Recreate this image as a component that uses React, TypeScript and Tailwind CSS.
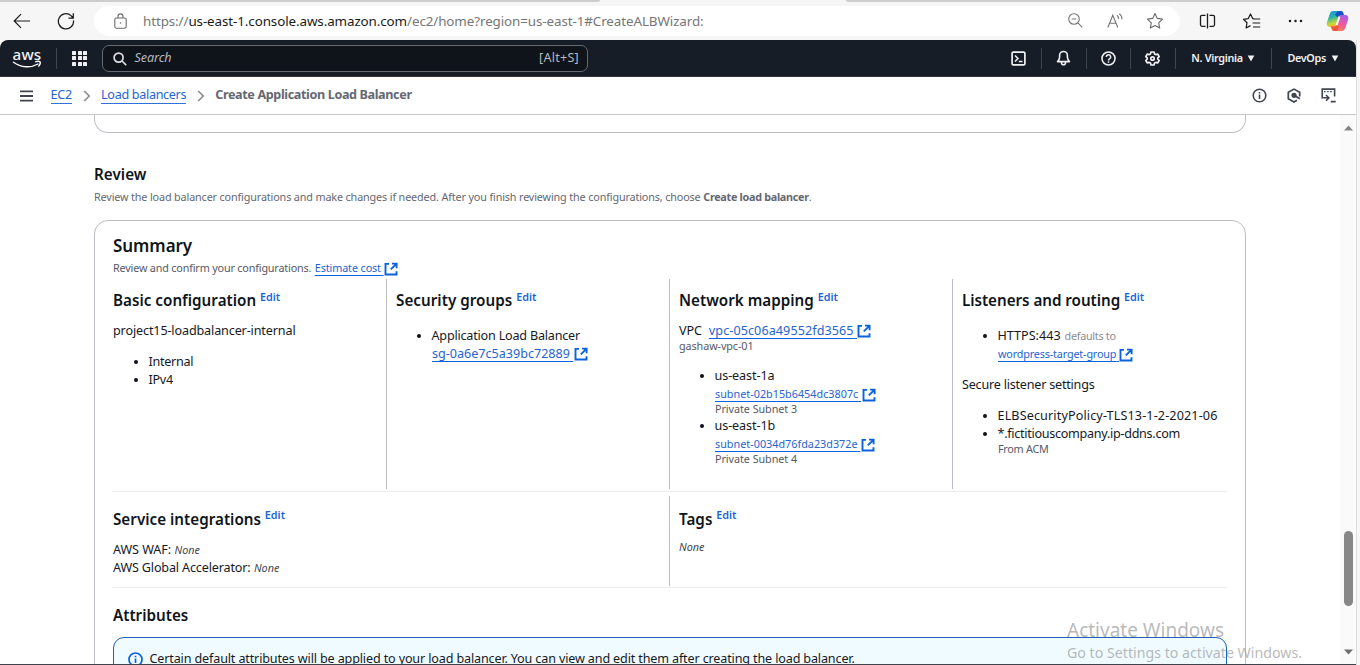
import type { ReactNode } from "react";

const body = "text-[12.6px] leading-[18px] h-[18px] pt-[2px] flex items-center";
const small = "text-[10.8px] leading-[16px] h-[16px] flex items-center";

function External({ className }: { className: string }) {
  return (
    <svg width="14" height="14" viewBox="0 0 14 14" fill="none" stroke="#0a62dd" strokeWidth="1.9" className={`ml-[0.5px] shrink-0 ${className}`}>
      <path d="M5 1.9H1.5v10.600h11V9.200M8 1.600h4.600v4.600M12.400 1.800 6.800 7.400" />
    </svg>
  );
}

function Link({ className, iconClass = "mt-px", children }: { className: string; iconClass?: string; children: ReactNode }) {
  return (
    <a className="flex items-center whitespace-pre text-[#2664cf]">
      <span className={`underline decoration-[#0a62dd] decoration-1 underline-offset-[3px] ${className}`}>{children}{"\u00a0"}</span>
      <External className={iconClass} />
    </a>
  );
}

function Heading({ children, edit = "mb-[6px]", className = "tracking-[0.02px]" }: { children: ReactNode; edit?: string; className?: string }) {
  return (
    <h3 className="flex h-[22px] items-center text-[15.2px] leading-[22px] font-semibold text-[#0f141a]">
      <span className={className}>{children}</span>
      {edit !== "" && <a className={`ml-[3.8px] text-[10.8px] leading-[14px] text-[#1b64d8] ${edit}`}>Edit</a>}
    </h3>
  );
}

function Item({ children }: { children: ReactNode }) {
  return (
    <li className={`${body} pl-[36px]`}>
      <span className="-ml-[15px] mr-[10.5px] -mt-px size-[4px] rounded-full bg-[#0f141a]" />
      {children}
    </li>
  );
}

function NavCell({ className, children }: { className: string; children: ReactNode }) {
  return (
    <div className="flex h-full items-center">
      <div className={`flex items-center justify-center pr-px ${className}`}>{children}</div>
      <div className="h-[21px] w-px bg-[#424650]" />
    </div>
  );
}

function Caret() {
  return (
    <svg width="8" height="7" viewBox="0 0 8 7" className="mt-px">
      <path d="M.7.6h6.6L4 6.4z" fill="#f0f1f4" />
    </svg>
  );
}

function BrowserBar() {
  return (
    <div className="flex h-[40px] flex-col bg-[#f6f6f6]">
      <div className="flex h-[2px] justify-between">
        <div className="w-[600px] rounded-br-[3px] bg-[#cdcdcd]" />
        <div className="w-[514px] rounded-bl-[3px] bg-[#cdcdcd]" />
      </div>
      <div className="flex h-[38px] items-center pl-[13px]">
        <svg width="18" height="18" viewBox="0 0 18 18" fill="none" stroke="#1b1b1b" strokeWidth="1.2" className="-mt-px">
          <path d="M17 9H1.5M8 2.2 1.2 9 8 15.8" />
        </svg>
        <svg width="18" height="18" viewBox="0 0 18 18" fill="none" stroke="#1b1b1b" strokeWidth="1.25" className="-mt-px ml-[26px]">
          <path d="M16.500 8.300A7.600 7.600 0 1 1 14 3.600L16.200 6M16.300 1.200V6h-4.800" />
        </svg>
        <div className="ml-[19px] flex h-[30px] w-[1086px] items-center rounded-full bg-white pl-[20px]">
          <svg width="13" height="16" viewBox="0 0 13 16" fill="none" stroke="#6b6b6b" strokeWidth="1.1" className="-mt-px">
            <rect x=".8" y="5" width="11.4" height="10.2" rx="1.6" />
            <path d="M4 5V3.400a2.500 2.500 0 0 1 5 0V5" />
            <circle cx="6.5" cy="10" r=".8" fill="#6b6b6b" stroke="none" />
          </svg>
          <div className="ml-[16px] w-[925px] text-[13.4px] leading-[18px] tracking-[-0.095px] whitespace-nowrap text-[#767676]">
            https://<span className="text-[#1a1a1a]">us-east-1.console.aws.amazon.com</span>/ec2/home?region=us-east-1#CreateALBWizard:
          </div>
          <svg width="15" height="15" viewBox="0 0 15 15" fill="none" stroke="#757575" strokeWidth="1.1" className="-mt-px">
            <circle cx="6" cy="6" r="5.3" />
            <path d="M3.600 6h4.800M9.900 9.900l4.400 4.400" />
          </svg>
          <svg width="17" height="16" viewBox="0 0 17 16" fill="none" stroke="#757575" strokeWidth="1.1" className="-mt-px ml-[24px]">
            <path d="m.8 14.500 5-12.300 5 12.300M2.600 10.200H9M10 2.200c1.300 1 1.700 2.400 1.400 3.800M12.300.8c2.300 1.800 3 3.600 2.400 5.600" />
          </svg>
          <svg width="18" height="18" viewBox="0 0 18 18" fill="none" stroke="#6b6b6b" strokeWidth="1.1" strokeLinejoin="round" className="ml-[22px]">
            <path d="m9 1.500 2.300 4.900 5.300.7-3.900 3.700 1 5.300L9 13.500l-4.700 2.600 1-5.300-3.900-3.700 5.300-.7z" />
          </svg>
        </div>
        <svg width="17" height="16" viewBox="0 0 17 16" fill="none" stroke="#1b1b1b" strokeWidth="1.3" className="ml-[19px]">
          <path d="M6.500 2.300H3a1.500 1.500 0 0 0-1.500 1.500v8A1.500 1.500 0 0 0 3 13.300h3.500M10.500 2.300H14a1.500 1.500 0 0 1 1.500 1.500v8a1.500 1.500 0 0 1-1.500 1.500h-3.500M8.500.5V15.500" />
        </svg>
        <svg width="18" height="17" viewBox="0 0 18 17" fill="none" stroke="#1b1b1b" strokeWidth="1.2" strokeLinejoin="round" className="ml-[27px]">
          <path d="M11.200 5.800 9.700 5.600 7.500 1 5.300 5.600l-4.900.7L4 9.800 3.100 15l4.400-2.400M10.600 6h6.600M9.600 10h7.600M10 14h7.200" />
        </svg>
        <svg width="15" height="4" viewBox="0 0 15 4" fill="#1b1b1b" className="ml-[27px]">
          <circle cx="2" cy="2" r="1.25" /><circle cx="7.500" cy="2" r="1.25" /><circle cx="13" cy="2" r="1.25" />
        </svg>
        <svg width="23" height="22" viewBox="0 0 23 22" className="ml-[23px]">
          <defs>
            <linearGradient id="cpA" x1="0" y1="0" x2="0.3" y2="1">
              <stop offset="0" stopColor="#1a8fe8" /><stop offset=".45" stopColor="#2fb5a0" /><stop offset=".8" stopColor="#c8d83a" /><stop offset="1" stopColor="#f5b82e" />
            </linearGradient>
            <linearGradient id="cpB" x1=".8" y1="0" x2=".2" y2="1">
              <stop offset="0" stopColor="#a45cf0" /><stop offset=".5" stopColor="#ee5a9a" /><stop offset="1" stopColor="#fb8a4a" />
            </linearGradient>
          </defs>
          <path d="M7.200 1h7.600c1.600 0 2.200 1 2.600 2.400L18 5.500h-2.600c-1.700 0-2.600.8-3.100 2.300L10 15c-.4 1.300-1 2-2.400 2H3.800C1.200 17 .2 15 .9 12.600L3.700 4C4.400 2 5.400 1 7.200 1z" fill="url(#cpA)" />
          <path d="M11.500 1h3.300c1.600 0 2.200 1 2.600 2.400L18 5.500h-2.600c-1.700 0-2.600.8-3.100 2.300L9 5z" fill="#1453c8" />
          <path d="M15.800 21H8.200c-1.600 0-2.200-1-2.600-2.400L5 16.500h2.600c1.700 0 2.600-.8 3.100-2.300L13 7c.4-1.300 1-2 2.400-2h3.800c2.600 0 3.600 2 2.900 4.400L19.300 18c-.7 2-1.700 3-3.500 3z" fill="url(#cpB)" />
          <path d="M11.500 21H8.200c-1.600 0-2.200-1-2.600-2.400L5 16.500h2.600c1.700 0 2.600-.8 3.100-2.300l2.300 2z" fill="#f0563e" />
          <path d="m9.600 15 3.200-9.200 1.400 1.600-2.700 8z" fill="#fff" />
        </svg>
      </div>
    </div>
  );
}

function NavBar() {
  return (
    <div className="flex h-[37px] w-[1356px] items-center rounded-t-[8px] border-b border-[#2e333c] bg-[#161d26] text-[#f0f1f4]">
      <div className="flex w-[56px] flex-col items-center pr-[2px]">
        <span className="h-[13px] text-[15.2px] leading-[12px] font-medium tracking-[0.2px]">aws</span>
        <svg width="30" height="9" viewBox="0 0 30 9" fill="none" stroke="#fff" strokeWidth="1.4" className="-mt-px" strokeLinecap="round">
          <path d="M1.500 2.200c7.500 5.500 17 6 24.500 1.800M23.800 1.700c1.700-.5 3.500-.5 4.200.1.500.8-.1 2.900-1.200 4.300" />
        </svg>
      </div>
      <div className="h-[21px] w-px bg-[#424650]" />
      <div className="ml-[15px] grid grid-cols-3 gap-[1.500px]">
        {[0, 1, 2, 3, 4, 5, 6, 7, 8].map((n) => (
          <span key={n} className="size-[4px] rounded-[0.5px] bg-[#f0f1f4]" />
        ))}
      </div>
      <div className="ml-[15px] flex h-[27px] w-[486px] items-center rounded-[7px] border border-[#656a74] bg-[#0f141a] pr-[8px] pl-[10px] text-[12.6px] leading-[18px] text-[#b4b8c0]">
        <svg width="14" height="14" viewBox="0 0 14 14" fill="none" stroke="#dedee3" strokeWidth="1.7" className="mt-px">
          <circle cx="5.600" cy="5.600" r="4.500" />
          <path d="m9 9 4.200 4.200" />
        </svg>
        <span className="ml-[7.500px] italic tracking-[-0.09px]">Search</span>
        <span className="ml-auto tracking-[0.25px]">[Alt+S]</span>
      </div>
      <div className="ml-auto flex h-full items-center text-[10.8px] leading-[16px] font-semibold">
        <NavCell className="w-[44px]">
          <svg width="15" height="15" viewBox="0 0 15 15" fill="none" stroke="#f0f1f4" strokeWidth="1.7">
            <rect x="1.100" y="1.100" width="12.800" height="12.800" rx="1.200" />
            <path d="m4 4.500 3 3-3 3M7.800 10.600h3.700" strokeWidth="1.5" />
          </svg>
        </NavCell>
        <NavCell className="w-[44px]">
          <svg width="15" height="16" viewBox="0 0 15 16" fill="none" stroke="#f0f1f4" strokeWidth="1.6" strokeLinejoin="round" className="mr-px">
            <path d="M1.500 11.600h12c-1.500-1.200-2.100-2.600-2.100-4.500V5.400a3.900 3.900 0 0 0-7.800 0v1.700c0 1.900-.6 3.300-2.100 4.500zM5.500 12v.8a2 2 0 0 0 4 0V12" />
          </svg>
        </NavCell>
        <NavCell className="w-[43px]">
          <svg width="15" height="15" viewBox="0 0 15 15" fill="none" stroke="#f0f1f4" strokeWidth="1.6">
            <circle cx="7.500" cy="7.500" r="6.500" />
            <path d="M5.300 6a2.200 2.200 0 1 1 3.200 1.900c-.7.400-1 .7-1 1.500M7.500 10.300v1.500" strokeWidth="1.5" />
          </svg>
        </NavCell>
        <NavCell className="w-[44px]">
          <svg width="15" height="15" viewBox="0 0 15 15" fill="none" stroke="#f0f1f4" strokeWidth="1.7" strokeLinejoin="round">
            <path d="m6 1-.5 1.900-1.300.7-2-.5-1.400 2.500 1.400 1.300v1.300L.8 9.500l1.400 2.400 2-.5 1.300.7L6 14h3l.5-1.900 1.300-.7 2 .5 1.400-2.400-1.400-1.300V6.900l1.400-1.300-1.400-2.500-2 .5-1.300-.7L9 1z" />
            <circle cx="7.500" cy="7.500" r="1.700" />
          </svg>
        </NavCell>
        <NavCell className="w-[95px] gap-[4px]">
          <span className="mb-px tracking-[-0.3px] whitespace-nowrap">N. Virginia</span>
          <Caret />
        </NavCell>
        <div className="flex w-[84px] items-center gap-[5px] pl-[15.500px]">
          <span className="mb-px tracking-[-0.35px]">DevOps</span>
          <Caret />
        </div>
      </div>
    </div>
  );
}

function Chevron() {
  return (
    <svg width="8" height="12" viewBox="0 0 8 12" fill="none" stroke="#8c8c94" strokeWidth="1.7">
      <path d="m1.200 1 5 5-5 5" />
    </svg>
  );
}

function Breadcrumbs() {
  const link = "border-b border-[#2f72d8] text-[#2664cf]";
  return (
    <div className="flex h-[38px] w-[1356px] items-center border-b border-[#c6c6cd] pl-[20px] text-[12.6px] leading-[16px] whitespace-nowrap">
      <svg width="13" height="12" viewBox="0 0 13 12" stroke="#424650" strokeWidth="1.8">
        <path d="M0 1.400h13M0 6h13M0 10.600h13" />
      </svg>
      <a className={`-mt-px ml-[17.500px] tracking-[-0.2px] ${link}`}>EC2</a>
      <span className="ml-[11px]"><Chevron /></span>
      <a className={`-mt-px ml-[10px] tracking-[-0.32px] ${link}`}>Load balancers</a>
      <span className="ml-[10.500px]"><Chevron /></span>
      <span className="-mt-[2px] ml-[10.500px] font-bold tracking-[-0.37px] text-[#656871]">Create Application Load Balancer</span>
      <svg width="15" height="15" viewBox="0 0 15 15" fill="none" stroke="#424650" strokeWidth="1.6" className="mr-[20px] ml-auto">
        <circle cx="7.500" cy="7.500" r="6.300" />
        <path d="M7.500 6.500v4.500M7.500 3.900v1.500" />
      </svg>
      <svg width="14" height="15" viewBox="0 0 14 15" fill="none" stroke="#424650" strokeWidth="1.7" className="mr-[20px]">
        <path d="M12.700 8.500V4.300L7 1.100 1.300 4.300v6.400L7 13.900l3-1.700" />
        <circle cx="7" cy="7.300" r="1.800" fill="#424650" />
        <path d="m7.500 7.500 5.300 3.300" />
      </svg>
      <svg width="15" height="15" viewBox="0 0 15 15" fill="none" stroke="#424650" strokeWidth="1.6" className="mr-[20px]">
        <path d="M13.600 8.500V1.100H1.200v8.700h6M5 7l2.900 2.900L5 12.800M9.700 13.600h5" />
        <path d="M3 3.600h8.800" strokeDasharray="1.600 1.500" strokeWidth="1.3" />
      </svg>
    </div>
  );
}

function Summary() {
  return (
    <section className="mt-[15px] flex h-[500px] w-[1152px] shrink-0 flex-col rounded-t-[14px] border border-[#bdbdc4] px-[18px] pt-[13px]">
      <h2 className="h-[24px] text-[17px] leading-[24px] font-semibold tracking-[-0.05px] text-[#0f141a]">Summary</h2>
      <div className={`${small} mt-[2px] text-[#565963]`}>
        <span className="mr-[3.500px] tracking-[-0.17px]">Review and confirm your configurations.</span>
        <Link className="tracking-[-0.11px]">Estimate cost</Link>
      </div>
      <div className="mt-[3px] flex h-[210px] text-[#16191f]">
        <div className="w-[274px] border-r border-[#bdbdc4] pt-[10px]">
          <Heading>Basic configuration</Heading>
          <div className={`${body} mt-[10px] tracking-[-0.135px]`}>project15-loadbalancer-internal</div>
          <ul className="mt-[13px]">
            <Item><span className="tracking-[-0.3px]">Internal</span></Item>
            <Item><span className="tracking-[-0.3px]">IPv4</span></Item>
          </ul>
        </div>
        <div className="w-[283px] border-r border-[#bdbdc4] pt-[10px] pl-[9px]">
          <Heading className="tracking-[0.04px]">Security groups</Heading>
          <ul className="mt-[15px]">
            <Item><span className="tracking-[-0.205px]">Application Load Balancer</span></Item>
          </ul>
          <div className={`${body} pl-[36px]`}><Link className="tracking-[-0.01px]" iconClass="-mt-px">sg-0a6e7c5a39bc72889</Link></div>
        </div>
        <div className="w-[283px] border-r border-[#bdbdc4] pt-[10px] pl-[9px]">
          <Heading>Network mapping</Heading>
          <div className={`${body} mt-[10px]`}>
            <span className="mr-[7px] tracking-[-0.1px]">VPC</span>
            <Link className="tracking-[0.08px]" iconClass="-mt-px">vpc-05c06a49552fd3565</Link>
          </div>
          <div className={`${small} -mt-px tracking-[-0.092px] text-[#565963]`}>gashaw-vpc-01</div>
          <ul className="mt-[12px]">
            <Item><span className="tracking-[-0.094px]">us-east-1a</span></Item>
            <li className="mt-[2px] mb-[-1px] pl-[36px]">
              <div className={small}><Link className="tracking-[0.01px]">subnet-02b15b6454dc3807c</Link></div>
              <div className={`${small} -mt-px tracking-[-0.06px] text-[#565963]`}>Private Subnet 3</div>
            </li>
            <Item><span className="tracking-[-0.094px]">us-east-1b</span></Item>
            <li className="mt-[2px] pl-[36px]">
              <div className={small}><Link className="tracking-[0.01px]">subnet-0034d76fda23d372e</Link></div>
              <div className={`${small} -mt-px tracking-[-0.06px] text-[#565963]`}>Private Subnet 4</div>
            </li>
          </ul>
        </div>
        <div className="flex-1 pt-[10px] pl-[9px]">
          <Heading className="tracking-[-0.03px]">Listeners and routing</Heading>
          <ul className="mt-[15px]">
            <Item>
              <span>HTTPS:443</span>
              <span className="ml-[4px] text-[10.8px] tracking-[-0.29px] text-[#8c8c94]">defaults to</span>
            </Item>
          </ul>
          <div className={`${small} mt-[2px] pl-[36px]`}><Link className="tracking-[-0.16px]">wordpress-target-group</Link></div>
          <div className={`${body} mt-[13px] tracking-[-0.22px]`}>Secure listener settings</div>
          <ul className="mt-[13px]">
            <Item><span className="tracking-[0.126px] whitespace-nowrap">ELBSecurityPolicy-TLS13-1-2-2021-06</span></Item>
            <Item><span className="tracking-[-0.29px]">*.fictitiouscompany.ip-ddns.com</span></Item>
          </ul>
          <div className={`${small} -mt-px pl-[36px] tracking-[-0.26px] text-[#565963]`}>From ACM</div>
        </div>
      </div>
      <div className="mt-[2px] h-px w-[1114px] shrink-0 bg-[#ebebf0]" />
      <div className="mt-[4px] flex h-[90px] shrink-0 text-[#16191f]">
        <div className="w-[557px] border-r border-[#bdbdc4] pt-[12px]">
          <Heading edit="mb-[8px]">Service integrations</Heading>
          <div className={`${body} mt-[10px]`}>
            <span className="mr-[3.500px] tracking-[-0.076px]">AWS WAF:</span>
            <i className="text-[10.8px] text-[#424650]">None</i>
          </div>
          <div className={body}>
            <span className="mr-[3.500px] tracking-[-0.16px]">AWS Global Accelerator:</span>
            <i className="text-[10.8px] text-[#424650]">None</i>
          </div>
        </div>
        <div className="pt-[12px] pl-[9px]">
          <Heading edit="mb-[8px]">Tags</Heading>
          <div className={`${small} mt-[9px] text-[#424650] italic`}>None</div>
        </div>
      </div>
      <div className="mt-px h-px w-[1114px] shrink-0 bg-[#ebebf0]" />
      <div className="mt-[16px] shrink-0"><Heading edit="">Attributes</Heading></div>
      <div className="mt-[11px] flex h-[60px] w-[1114px] shrink-0 items-start rounded-[11px] border border-[#1b62b8] bg-[#f0fbff] pt-[12px] pl-[13.500px] text-[12.6px] leading-[18px] text-[#16191f]">
        <svg width="15" height="15" viewBox="0 0 15 15" fill="none" stroke="#0a62dd" strokeWidth="1.7" className="mt-[2px] mr-[7px]">
          <circle cx="7.500" cy="7.500" r="6.500" />
          <path d="M7.500 6.500v4.500M7.500 3.700v1.600" />
        </svg>
        <span className="tracking-[-0.15px] whitespace-nowrap">Certain default attributes will be applied to your load balancer. You can view and edit them after creating the load balancer.</span>
      </div>
    </section>
  );
}

export default function App() {
  return (
    <div className="relative flex h-[665px] w-[1360px] flex-col overflow-hidden bg-[#f6f6f6] font-['Noto_Sans',sans-serif]">
      <BrowserBar />
      <div className="flex h-[625px] w-full">
        <div className="flex w-[1357px] flex-col border-r border-[#dedede] bg-white">
          <NavBar />
          <Breadcrumbs />
          <div className="flex h-[549px]">
            <main className="flex w-[1340px] flex-col overflow-hidden pl-[94px]">
              <div className="h-[18px] w-[1152px] shrink-0 rounded-b-[14px] border border-t-0 border-[#bdbdc4]" />
              <h2 className="mt-[30px] h-[22px] shrink-0 text-[15.2px] leading-[22px] font-semibold tracking-[0.05px] text-[#0f141a]">Review</h2>
              <p className="mt-[4px] h-[16px] shrink-0 text-[10.8px] leading-[16px] tracking-[-0.14px] whitespace-nowrap text-[#656871]">
                Review the load balancer configurations and make changes if needed. After you finish reviewing the configurations, choose{" "}
                <b className="tracking-[-0.29px]">Create load balancer</b>.
              </p>
              <Summary />
            </main>
            <div className="flex w-[16px] flex-col items-center bg-[#fafafa] pt-[10px] pb-[9px]">
              <svg width="9" height="6" viewBox="0 0 9 6"><path d="M4.500.5 9 5.500H0z" fill="#858585" /></svg>
              <div className="mt-[400px] h-[75px] w-[9px] shrink-0 rounded-full bg-[#878787]" />
              <svg width="9" height="6" viewBox="0 0 9 6" className="mt-auto"><path d="M4.500 5.500 9 .5H0z" fill="#6f6f6f" /></svg>
            </div>
          </div>
          <div className="h-px shrink-0 bg-[#3f444c]" />
        </div>
      </div>
      <div className="absolute top-[617px] left-[1067px] whitespace-nowrap text-[#8a8a8a]/60">
        <div className="text-[19px] leading-[26px]">Activate Windows</div>
        <div className="mt-px text-[14.2px] leading-[18px]">Go to Settings to activate Windows.</div>
      </div>
    </div>
  );
}
